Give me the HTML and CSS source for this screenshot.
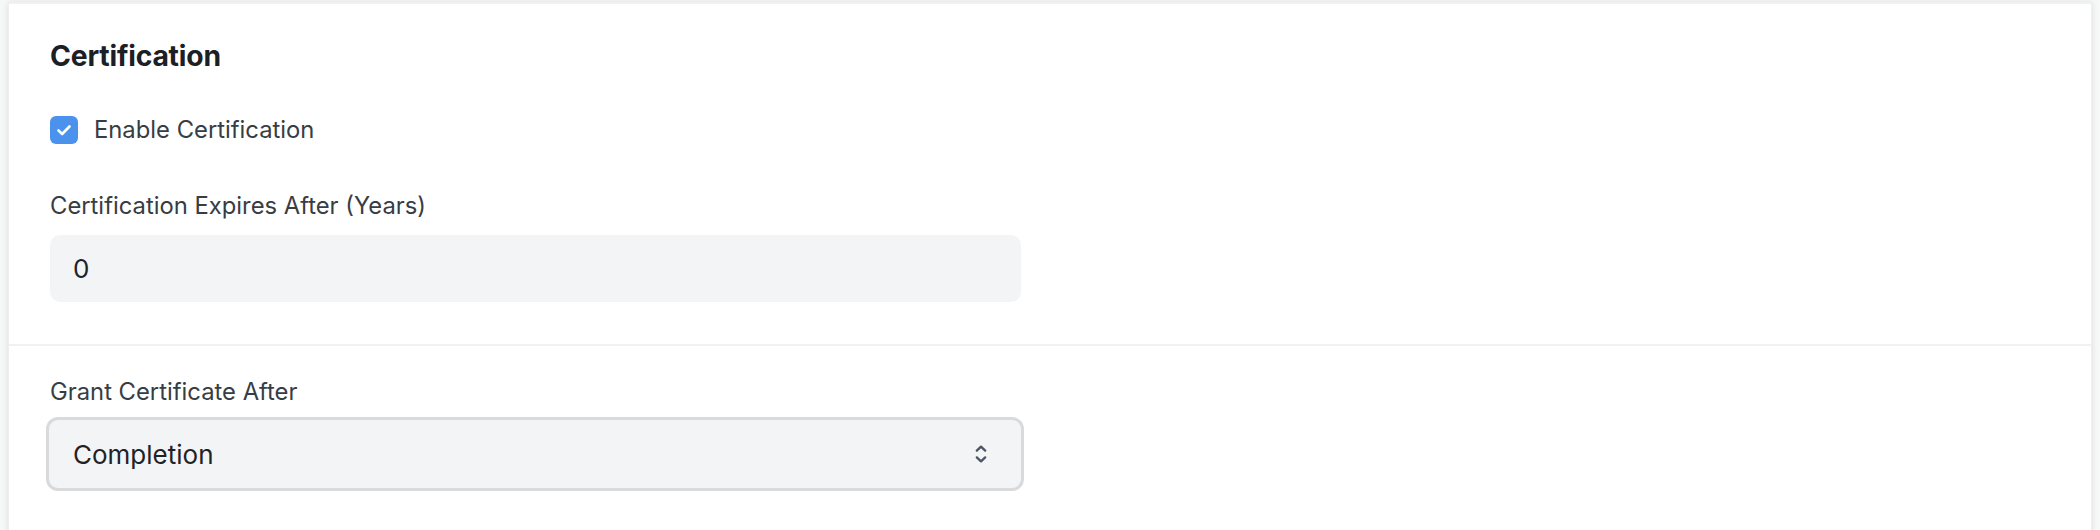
FILE: index.html
```html
<!DOCTYPE html>
<html>
<head>
<meta charset="utf-8">
<link rel="stylesheet" href="styles.css">
</head>
<body>
<div class="card">
  <section class="section first">
    <h2 class="title">Certification</h2>
    <label class="check-row">
      <span class="checkbox">
        <svg viewBox="0 0 16 16" width="20" height="20"><path d="M3.6 8.4l2.9 2.8 5.9-6" fill="none" stroke="#fff" stroke-width="2.1" stroke-linecap="round" stroke-linejoin="round"/></svg>
      </span>
      <span class="check-label">Enable Certification</span>
    </label>
    <div class="field">
      <div class="label">Certification Expires After (Years)</div>
      <div class="input">0</div>
    </div>
  </section>
  <section class="section second">
    <div class="field">
      <div class="label">Grant Certificate After</div>
      <div class="select">
        <span>Completion</span>
        <svg class="chev" viewBox="0 0 12 24" width="12" height="24"><path d="M1.8 8.6L6 4.6l4.2 4M1.8 15.4L6 19.4l4.2-4" fill="none" stroke="#4b5563" stroke-width="2.3" stroke-linecap="round" stroke-linejoin="round"/></svg>
      </div>
    </div>
  </section>
</div>
</body>
</html>
```
FILE: styles.css
```css
html, body {
  margin: 0;
  padding: 0;
  background: #f7f8f8;
  font-family: Inter, "Noto Sans", sans-serif;
}
body {
  padding: 0 8px;
  height: 530px;
  overflow: hidden;
}
.card {
  background: #fff;
  height: 530px;
  box-shadow: -2px 0 6px rgba(0,0,0,0.06), 2px 0 6px rgba(0,0,0,0.06);
  border-left: 1px solid #eeeeee;
  border-right: 1px solid #eeeeee;
}
.section {
  padding: 0 41px;
}
.first {
  border-top: 2px solid #f1f1f1;
  margin-top: 2px;
  padding-top: 35px;
  padding-bottom: 42px;
  border-bottom: 2px solid #f1f1f1;
}
.title {
  margin: 0;
  font-size: 28.3px;
  font-weight: 700;
  color: #1c2024;
  line-height: 34px;
  letter-spacing: -0.2px;
}
.check-row {
  display: flex;
  align-items: center;
  gap: 16px;
  margin-top: 42px;
  height: 30px;
}
.checkbox {
  width: 28px;
  height: 28px;
  border-radius: 6px;
  background: #4a92ec;
  display: flex;
  align-items: center;
  justify-content: center;
}
.check-label {
  font-size: 23.8px;
  line-height: 30px;
  color: #383d44;
}
.field {
  display: flex;
  flex-direction: column;
}
.first .field {
  margin-top: 46px;
}
.label {
  font-size: 23.8px;
  color: #383d44;
  line-height: 30px;
}
.input {
  margin-top: 14px;
  height: 67px;
  width: 971px;
  background: #f3f4f6;
  border-radius: 10px;
  box-sizing: border-box;
  padding-left: 23px;
  display: flex;
  align-items: center;
  font-size: 26px;
  color: #1f2328;
}
.second {
  padding-top: 31px;
}
.second .field {
  margin-left: -4px;
}
.second .label {
  margin-left: 4px;
}
.select {
  margin-top: 10px;
  height: 74px;
  width: 978px;
  box-sizing: border-box;
  background: #f3f4f6;
  border: 3px solid #d9dadc;
  border-radius: 12px;
  display: flex;
  align-items: center;
  justify-content: space-between;
  padding: 0 34px 0 24px;
  font-size: 26px;
  color: #1f2328;
}
.chev {
  display: block;
}
```
